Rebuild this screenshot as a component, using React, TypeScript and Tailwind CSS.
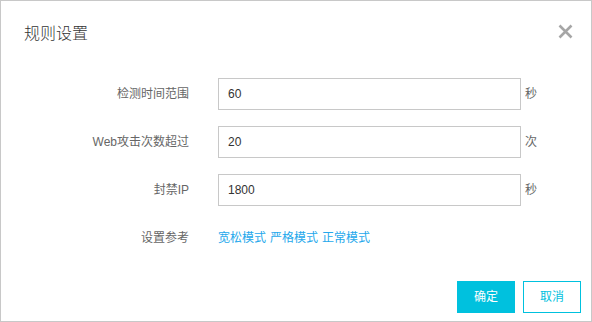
const rows = [
  { label: "检测时间范围", value: "60", unit: "秒" },
  { label: "Web攻击次数超过", value: "20", unit: "次" },
  { label: "封禁IP", value: "1800", unit: "秒" },
];

const CloseIcon = () => (
  <svg width="15" height="15" viewBox="0 0 15 15" className="block">
    <path d="M1.5 1.5 L13.5 13.5 M13.5 1.5 L1.5 13.5" stroke="#a6a6a6" strokeWidth="2.6" fill="none" />
  </svg>
);

export default function App() {
  return (
    <div
      className="w-[592px] h-[322px] bg-white border border-[#c8c8c8] flex flex-col"
      style={{ fontFamily: '"Liberation Sans", "Noto Sans CJK SC", sans-serif' }}
    >
      {/* header */}
      <div className="flex justify-between items-start pl-[23px] pr-[18px] pt-[21px]">
        <h2 className="text-[16px] leading-6 text-[#333] font-light">规则设置</h2>
        <button aria-label="Close" className="mt-[2px]">
          <CloseIcon />
        </button>
      </div>

      {/* form */}
      <div className="mt-[32px] flex flex-col gap-4">
        {rows.map((row) => (
          <div key={row.label} className="flex items-center h-8">
            <label className="w-[188px] text-right text-[12px] text-[#666]">{row.label}</label>
            <input
              readOnly
              value={row.value}
              className="ml-[29px] w-[303px] h-8 border border-[#c8c8c8] px-[9px] text-[12px] text-[#333] outline-none"
            />
            <span className="ml-[4px] text-[12px] text-[#666]">{row.unit}</span>
          </div>
        ))}
        <div className="flex items-center h-8">
          <span className="w-[188px] text-right text-[12px] text-[#666]">设置参考</span>
          <div className="ml-[29px] flex gap-[4px] text-[12px] text-[#25a8ec]">
            <a href="#">宽松模式</a>
            <a href="#">严格模式</a>
            <a href="#">正常模式</a>
          </div>
        </div>
      </div>

      {/* footer */}
      <div className="mt-[27px] flex justify-end gap-2 pr-[10px]">
        <button className="w-[58px] h-8 bg-[#00c1de] text-white text-[12px]">确定</button>
        <button className="w-[58px] h-8 border border-[#00c1de] text-[#00c1de] text-[12px] bg-white">取消</button>
      </div>
    </div>
  );
}
